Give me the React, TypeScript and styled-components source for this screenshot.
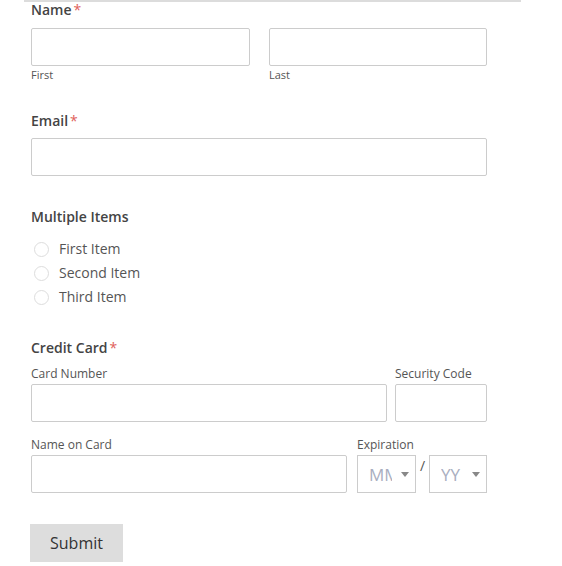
import React from "react";
import styled, { createGlobalStyle } from "styled-components";

const Global = createGlobalStyle`
  html, body { margin: 0; padding: 0; background: #fff; }
  body { font-family: "Open Sans", "Noto Sans", sans-serif; color: #444; }
  * { box-sizing: border-box; }
`;

const Page = styled.div`
  margin-left: 24px;
  width: 497px;
  border-top: 2px solid #dcdcdc;
  padding: 0 0 0 7px;
`;

const Form = styled.form`
  width: 456px;
  display: flex;
  flex-direction: column;
`;

const Field = styled.div<{ $mt?: number }>`
  margin-top: ${(p) => p.$mt ?? 0}px;
  display: flex;
  flex-direction: column;
`;

const Legend = styled.div<{ $mb?: number }>`
  font-size: 14px;
  font-weight: 600;
  color: #444;
  line-height: 20px;
  margin-bottom: ${(p) => p.$mb ?? 8}px;
`;

const Req = styled.span`
  color: #e0605a;
  font-weight: 400;
  margin-left: 2px;
`;

const Row = styled.div<{ $gap: number; $mt?: number }>`
  display: flex;
  gap: ${(p) => p.$gap}px;
  align-items: flex-end;
  margin-top: ${(p) => p.$mt ?? 0}px;
`;

const Col = styled.div<{ $w: number }>`
  width: ${(p) => p.$w}px;
  flex: none;
  display: flex;
  flex-direction: column;
`;

const Input = styled.input`
  display: block;
  width: 100%;
  height: 38px;
  border: 1px solid #ccc;
  border-radius: 2px;
  background: #fff;
  padding: 0 8px;
  font: inherit;
`;

const Sub = styled.label`
  font-size: 11px;
  color: #555;
  line-height: 15px;
  margin-top: 1px;
`;

const Top = styled.label`
  font-size: 12px;
  color: #555;
  line-height: 16px;
  margin-bottom: 2px;
`;

const Radios = styled.div`
  display: flex;
  flex-direction: column;
  gap: 4px;
  padding-left: 3px;
`;

const RadioRow = styled.label`
  display: flex;
  align-items: center;
  height: 20px;
  font-size: 14px;
  color: #555;
`;

const Circle = styled.span`
  width: 15px;
  height: 15px;
  margin-top: 2px;
  border-radius: 50%;
  border: 1px solid #ddd;
  background: #fff;
  margin-right: 10px;
`;

const Exp = styled.div`
  display: flex;
  align-items: flex-start;
`;

const Select = styled.div<{ $w: number }>`
  width: ${(p) => p.$w}px;
  flex: none;
  height: 38px;
  border: 1px solid #ccc;
  display: flex;
  align-items: center;
  justify-content: space-between;
  padding: 0 6px 0 11px;
  font-size: 17px;
  color: #a9aec0;
`;

const Placeholder = styled.span<{ $w: number }>`
  width: ${(p) => p.$w}px;
  overflow: hidden;
  white-space: nowrap;
`;

const Caret = styled.span`
  width: 0;
  height: 0;
  border-left: 4px solid transparent;
  border-right: 4px solid transparent;
  border-top: 5px solid #888;
`;

const Slash = styled.span`
  width: 13px;
  flex: none;
  text-align: center;
  font-size: 14px;
  color: #555;
  line-height: 22px;
`;

const Button = styled.button`
  margin-top: 31px;
  align-self: flex-start;
  margin-left: -1px;
  width: 93px;
  height: 38px;
  background: #ddd;
  border: none;
  font-family: inherit;
  font-size: 16px;
  color: #333;
`;

export default function App() {
  return (
    <>
      <Global />
      <Page>
        <Form>
          <Field $mt={-2}>
            <Legend $mb={8}>
              Name<Req>*</Req>
            </Legend>
            <Row $gap={19}>
              <Col $w={219}>
                <Input />
                <Sub>First</Sub>
              </Col>
              <Col $w={218}>
                <Input />
                <Sub>Last</Sub>
              </Col>
            </Row>
          </Field>
          <Field $mt={29}>
            <Legend $mb={7}>
              Email<Req>*</Req>
            </Legend>
            <Input />
          </Field>
          <Field $mt={31}>
            <Legend $mb={11}>Multiple Items</Legend>
            <Radios>
              <RadioRow>
                <Circle />
                First Item
              </RadioRow>
              <RadioRow>
                <Circle />
                Second Item
              </RadioRow>
              <RadioRow>
                <Circle />
                Third Item
              </RadioRow>
            </Radios>
          </Field>
          <Field $mt={32}>
            <Legend $mb={8}>
              Credit Card<Req>*</Req>
            </Legend>
            <Row $gap={8}>
              <Col $w={356}>
                <Top>Card Number</Top>
                <Input />
              </Col>
              <Col $w={92}>
                <Top>Security Code</Top>
                <Input />
              </Col>
            </Row>
            <Row $gap={10} $mt={15}>
              <Col $w={316}>
                <Top>Name on Card</Top>
                <Input />
              </Col>
              <Col $w={130}>
                <Top>Expiration</Top>
                <Exp>
                  <Select $w={59}>
                    <Placeholder $w={23}>MM</Placeholder>
                    <Caret />
                  </Select>
                  <Slash>/</Slash>
                  <Select $w={58}>
                    <Placeholder $w={24}>YY</Placeholder>
                    <Caret />
                  </Select>
                </Exp>
              </Col>
            </Row>
          </Field>
          <Button type="button">Submit</Button>
        </Form>
      </Page>
    </>
  );
}
